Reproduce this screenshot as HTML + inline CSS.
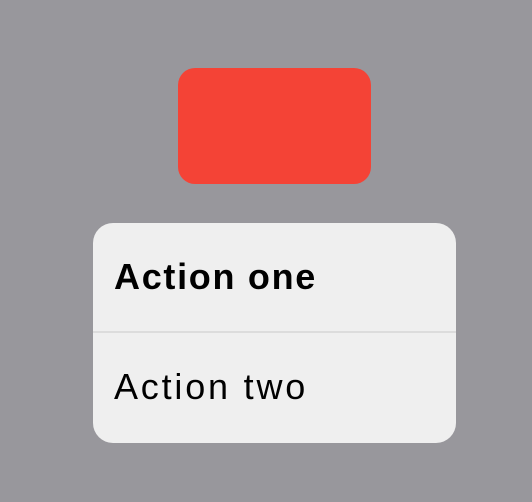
<!DOCTYPE html>
<html><head><style>
html,body{margin:0;padding:0;width:532px;height:502px;background:#98979c;overflow:hidden;font-family:"Liberation Sans",sans-serif}
.red{position:absolute;left:178px;top:68px;width:193px;height:116px;border-radius:17px;background:#f44336}
.menu{position:absolute;left:93px;top:223px;width:363px;height:220px;border-radius:20px;background:#efefef;overflow:hidden}
.item{position:absolute;left:21px;font-size:36px;color:#000;line-height:1}
.div{position:absolute;left:0;right:0;top:108px;height:2px;background:#dcdcdc}
</style></head><body>
<div class="red"></div>
<div class="menu">
<div class="item" style="top:36px;font-weight:bold;letter-spacing:1.7px">Action one</div>
<div class="div"></div>
<div class="item" style="top:146px;letter-spacing:2.8px">Action two</div>
</div>
</body></html>
